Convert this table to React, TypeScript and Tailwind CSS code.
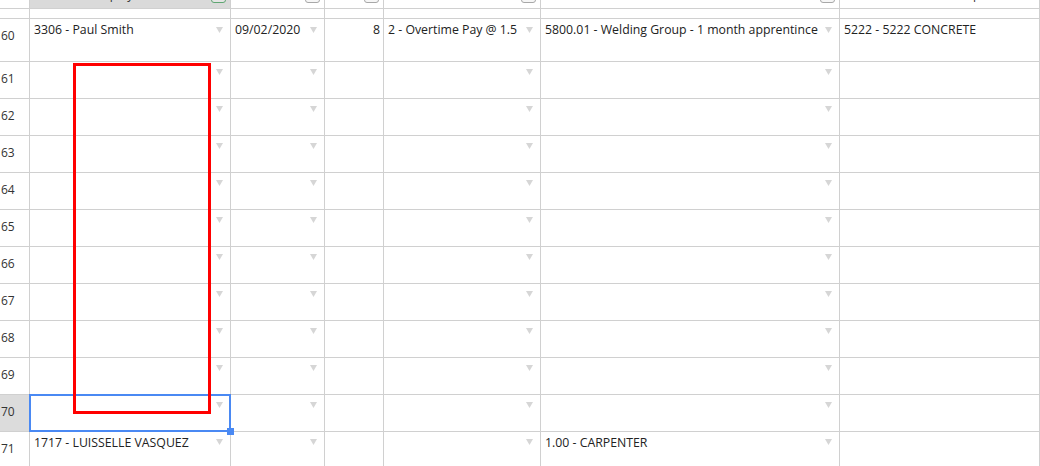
import React from 'react';

type Col = { w: string; tri: boolean; right?: boolean };

const COLS: Col[] = [
  { w: 'w-[201px]', tri: true },
  { w: 'w-[94px]', tri: true },
  { w: 'w-[59px]', tri: false, right: true },
  { w: 'w-[157px]', tri: true },
  { w: 'w-[299px]', tri: true },
  { w: 'flex-1', tri: false },
];

type Row = { n: number; h: string; triTop: string; cells: string[]; selected?: boolean };

const empty = ['', '', '', '', '', ''];

const ROWS: Row[] = [
  {
    n: 60,
    h: 'h-[43px]',
    triTop: 'mt-[8px]',
    cells: [
      '3306 - Paul Smith',
      '09/02/2020',
      '8',
      '2 - Overtime Pay @ 1.5',
      '5800.01 - Welding Group - 1 month apprentince',
      '5222 - 5222 CONCRETE',
    ],
  },
  ...[61, 62, 63, 64, 65, 66, 67, 68, 69, 70].map((n) => ({
    n,
    h: 'h-[37px]',
    triTop: 'mt-[7px]',
    cells: empty,
    selected: n === 70,
  })),
  {
    n: 71,
    h: 'h-[37px]',
    triTop: 'mt-[7px]',
    cells: ['1717 - LUISSELLE VASQUEZ', '', '', '', '1.00 - CARPENTER', ''],
  },
];

const line = 'border-r border-b border-[#d0d0d0]';

function Caret() {
  return (
    <svg width="7" height="6" viewBox="0 0 7 6" className="shrink-0">
      <polygon points="0,0 7,0 3.5,6" fill="#d6d6d6" />
    </svg>
  );
}

function FilterBox({ active }: { active?: boolean }) {
  return (
    <div
      className={
        active
          ? 'w-[15px] h-[14px] -mt-[11px] mr-[4px] shrink-0 rounded-[3px] border border-[#5fa672] bg-[#e4e4e4]'
          : 'w-[15px] h-[14px] -mt-[11px] mr-[4px] shrink-0 rounded-[3px] border border-[#a8a8a8] bg-[#f6f6f6]'
      }
    />
  );
}

function HeaderRow() {
  return (
    <div className="flex h-[9px]">
      <div className={`w-[30px] shrink-0 ${line}`} />
      <div className={`${COLS[0].w} shrink-0 ${line} bg-[#dadada] flex overflow-hidden`}>
        <span className="pl-[62px] -mt-[13px] leading-4 text-[#333]">Employee</span>
        <div className="flex-1" />
        <FilterBox active />
      </div>
      {COLS.slice(1, 5).map((c, i) => (
        <div key={i} className={`${c.w} shrink-0 ${line} flex justify-end overflow-hidden`}>
          <FilterBox />
        </div>
      ))}
      <div className={`flex-1 ${line} flex overflow-hidden`}>
        <span className="pl-[77px] -mt-[13px] leading-4 text-[#333] whitespace-nowrap">Cost Group</span>
      </div>
    </div>
  );
}

function FillerRow() {
  return (
    <div className="flex h-[10px]">
      <div className={`w-[30px] shrink-0 ${line}`} />
      {COLS.map((c, i) => (
        <div key={i} className={`${c.w} shrink-0 ${line}`} />
      ))}
    </div>
  );
}

function DataRow({ row }: { row: Row }) {
  return (
    <div className={`flex ${row.h}`}>
      <div
        className={`w-[30px] shrink-0 ${line} pl-[1px] pt-[9px] leading-4 text-[#333] overflow-hidden ${
          row.selected ? 'bg-[#dcdcdc]' : ''
        }`}
      >
        {row.n}
      </div>
      {COLS.map((c, i) => (
        <div
          key={i}
          className={`${c.w} shrink-0 ${line} flex items-start overflow-hidden ${
            c.right ? 'justify-end pr-[3px]' : 'justify-between pl-1 pr-[7px]'
          }`}
        >
          <span className="pt-[3px] leading-4 text-[12.3px] whitespace-nowrap text-[#222]">{row.cells[i]}</span>
          {c.tri && (
            <div className={row.triTop}>
              <Caret />
            </div>
          )}
        </div>
      ))}
    </div>
  );
}

export default function App() {
  return (
    <div className="relative w-[1040px] h-[466px] overflow-hidden bg-white font-['Open_Sans',sans-serif] text-[12px]">
      <HeaderRow />
      <FillerRow />
      {ROWS.map((r) => (
        <DataRow key={r.n} row={r} />
      ))}

      {/* selected cell */}
      <div className="absolute left-[29px] top-[394px] w-[202px] h-[38px] border-2 border-[#4a89f3]" />
      <div className="absolute left-[227px] top-[428px] w-[7px] h-[7px] bg-[#4a89f3]" />

      {/* annotation box */}
      <div className="absolute left-[73px] top-[63px] w-[138px] h-[351px] border-[3px] border-[#ff0000]" />
    </div>
  );
}
